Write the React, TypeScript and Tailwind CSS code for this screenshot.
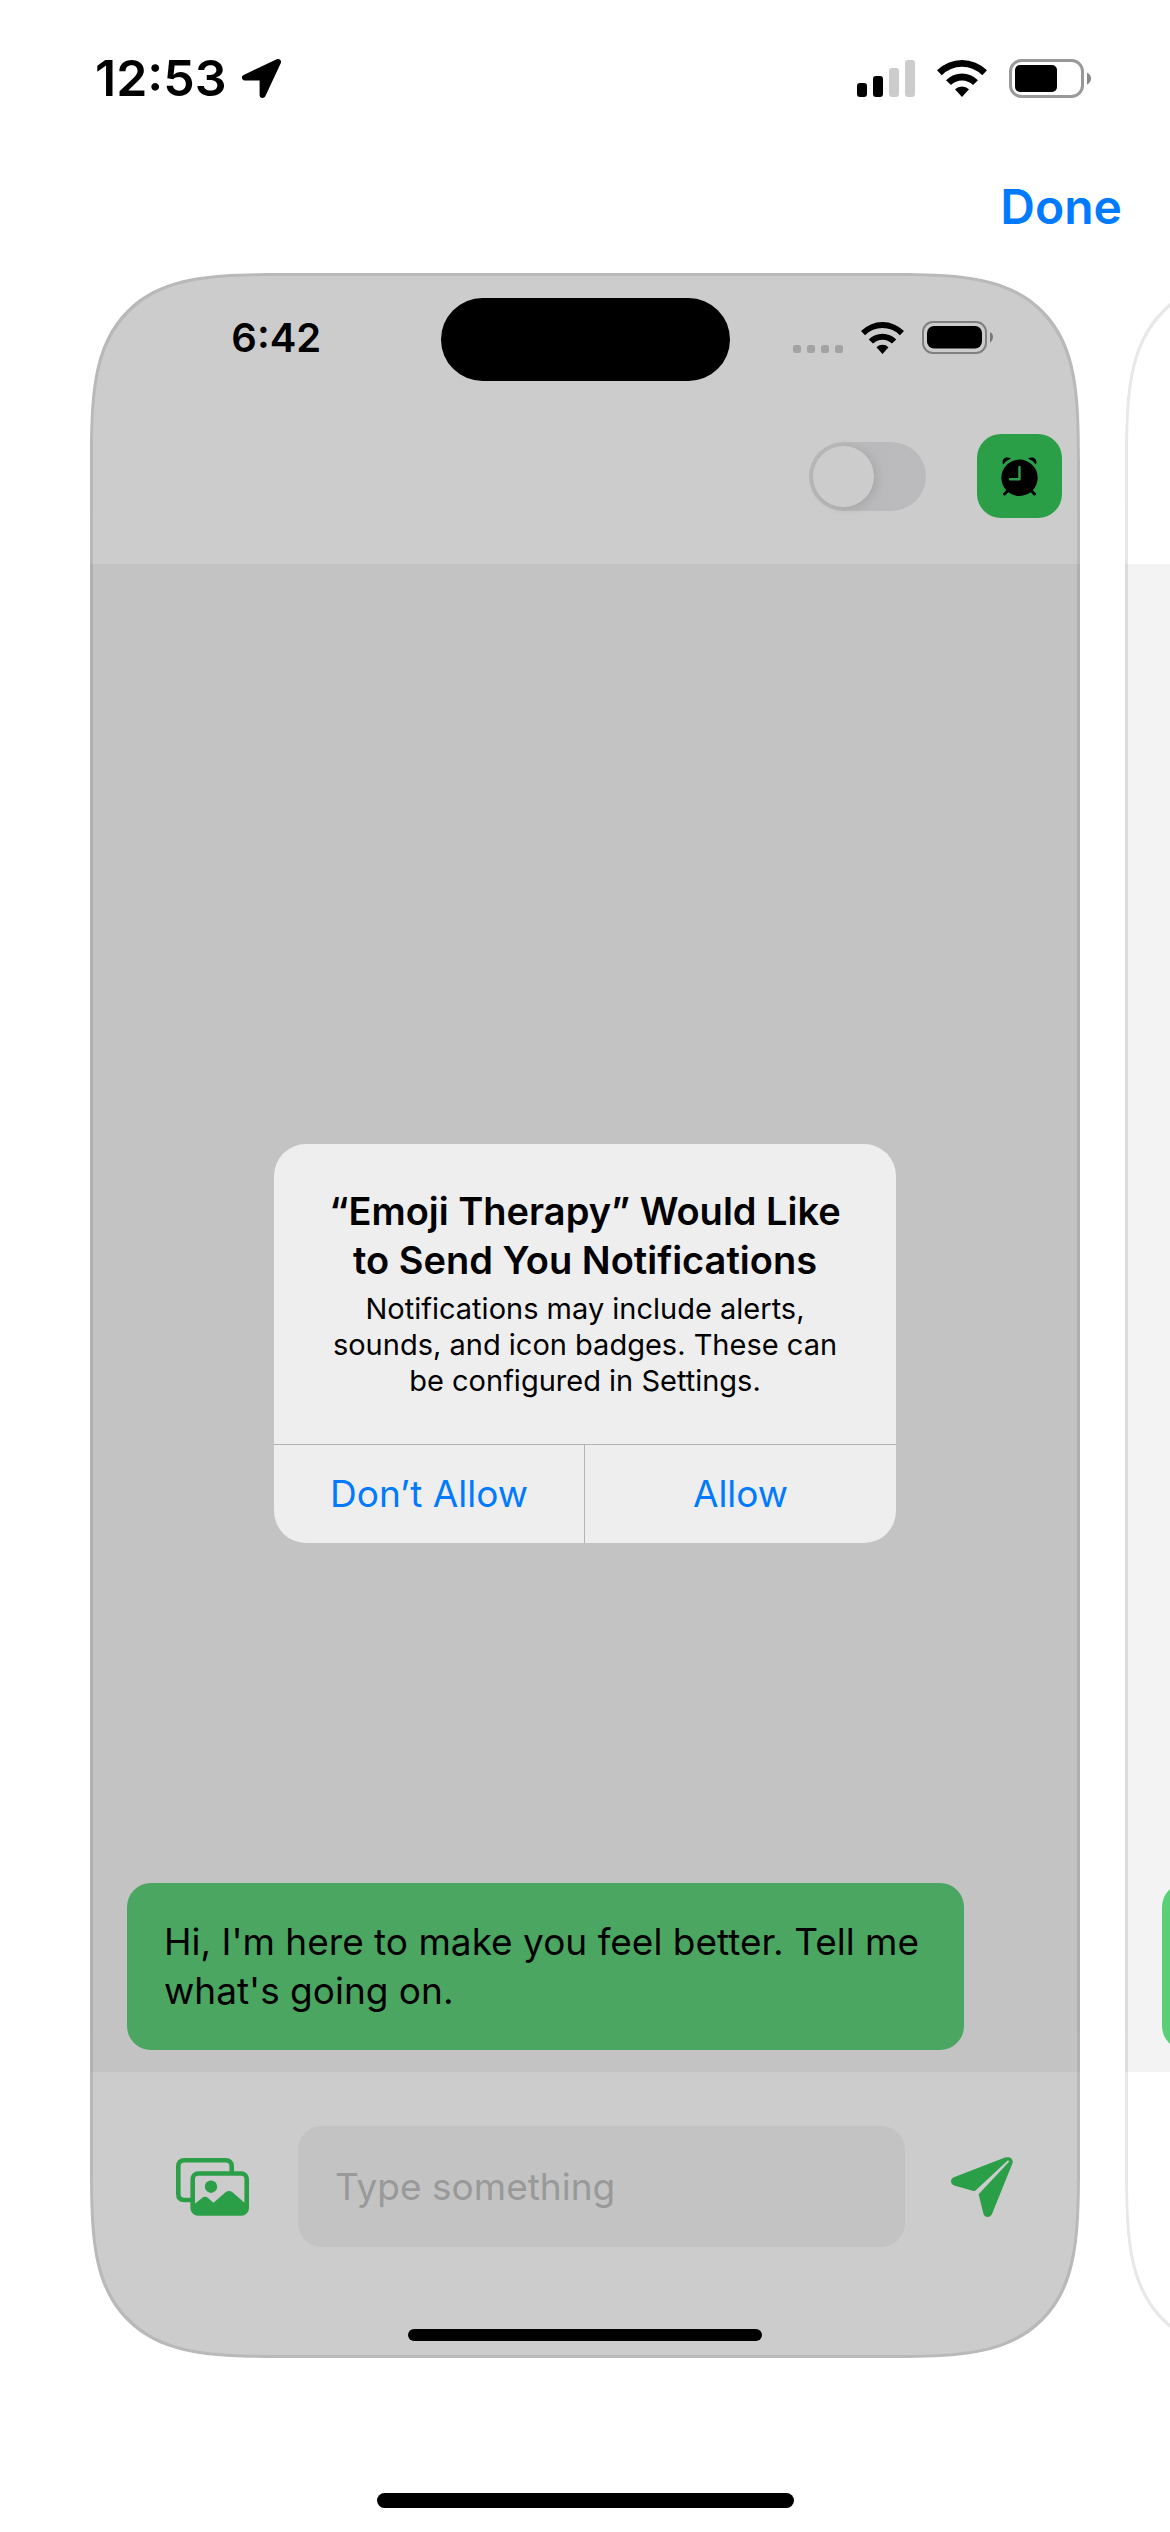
import React, { useState } from 'react';

const WifiIcon = ({ className }: { className: string }) => (
  <svg viewBox="0 0 50 37" className={className} fill="currentColor" aria-hidden="true">
    <path d="M0 10.3A35.5 35.5 0 0 1 50 10.3L45.3 15.3A28.6 28.6 0 0 0 4.7 15.3Z" />
    <path d="M9 20.3A22.2 22.2 0 0 1 41 20.3L36 25A15.6 15.6 0 0 0 14 25Z" />
    <path d="M18 29.2A10.4 10.4 0 0 1 32 29.2L25 37Z" />
  </svg>
);

const SignalIcon = () => (
  <svg viewBox="0 0 58 37" className="h-[37px] w-[58px]" aria-hidden="true">
    <rect x="0" y="23" width="10" height="14" rx="3" />
    <rect x="16" y="16" width="10" height="21" rx="3" />
    <rect x="32" y="8" width="10" height="29" rx="3" fill="#cccccc" />
    <rect x="48" y="0" width="10" height="37" rx="3" fill="#cccccc" />
  </svg>
);

const LocationIcon = () => (
  <svg viewBox="0 0 39 39" className="h-[39px] w-[39px]" aria-hidden="true">
    <path d="M36 3L3 18.6H20.6V36Z" stroke="black" strokeWidth="6" strokeLinejoin="round" />
  </svg>
);

const BatteryIcon = () => (
  <svg viewBox="0 0 82 39" className="h-[39px] w-[82px]" aria-hidden="true">
    <rect x="1.5" y="1.5" width="72" height="36" rx="11" fill="none" stroke="#999999" strokeWidth="3" />
    <rect x="6" y="6" width="42" height="27" rx="5" />
    <path d="M78 13.5Q82 15.5 82 19.5T78 25.5Z" fill="#888888" />
  </svg>
);

const FullBatteryIcon = () => (
  <svg viewBox="0 0 71 33" className="h-[33px] w-[71px]" aria-hidden="true">
    <rect x="1" y="1" width="63" height="31" rx="10" fill="none" stroke="#808080" strokeWidth="2" />
    <rect x="5" y="5" width="55" height="22.5" rx="7" />
    <path d="M68 11Q71 12.5 71 16T68 22Z" fill="#777777" />
  </svg>
);

const DotsIcon = () => (
  <svg viewBox="0 0 50 30" className="h-[30px] w-[50px]" fill="#a3a3a3" aria-hidden="true">
    <rect x="0" y="22" width="8" height="8" rx="2.5" />
    <rect x="14" y="22" width="8" height="8" rx="2.5" />
    <rect x="28" y="22" width="8" height="8" rx="2.5" />
    <rect x="42" y="22" width="8" height="8" rx="2.5" />
  </svg>
);

const AlarmIcon = () => (
  <svg viewBox="0 0 37 39" className="h-[39px] w-[37px]" aria-hidden="true">
    <path d="M2.2 7.6C-.5 2.8 4.8-1.8 10 1.6Q5 3.5 2.2 7.6Z" />
    <path d="M34.8 7.6C37.5 2.8 32.2-1.8 27 1.6Q32 3.5 34.8 7.6Z" />
    <path d="M3.5 37L8 32.5M33.5 37L29 32.5" stroke="black" strokeWidth="3" strokeLinecap="round" />
    <circle cx="18.5" cy="20.8" r="18.2" />
    <path d="M18.5 10V22.2H9" fill="none" stroke="#2b9f48" strokeWidth="2.4" strokeLinecap="round" strokeLinejoin="round" />
  </svg>
);

const PhotosIcon = () => (
  <svg viewBox="0 0 73 58" className="h-[58px] w-[73px]" fill="none" aria-hidden="true">
    <path d="M55.7 14V8.3Q55.7 2.3 49.7 2.3H8.3Q2.3 2.3 2.3 8.3V36Q2.3 42 8.3 42H15" stroke="#2b9f48" strokeWidth="4.6" />
    <rect x="16.7" y="15.5" width="54" height="40" rx="5.5" stroke="#2b9f48" strokeWidth="4.6" />
    <circle cx="35" cy="28.7" r="6.2" fill="#2b9f48" />
    <path d="M18 46.5L26 40Q29 37.5 32 40L37.5 44.7L49.5 34.3Q53 31.5 56.5 34.3L70 46V55H18Z" fill="#2b9f48" />
  </svg>
);

const SendIcon = () => (
  <svg viewBox="0 0 62 60" className="h-[60px] w-[62px]" fill="#2b9f48" aria-hidden="true">
    <path d="M54 .6Q61.5-1.2 61.8 5.5L41 57Q39.5 60 36.5 60Q33.5 60 32.5 57L27.6 37.2L58.3 4.5L57 3.2L24.5 33.6Q23.7 34.3 22.5 34L4 28.8Q0 27.5 0 24.3Q0 21.5 3.5 20Z" />
  </svg>
);

const PhoneFrame = ({ children, className }: { children: React.ReactNode; className: string }) => (
  <section
    className={`relative flex w-full shrink-0 flex-col overflow-hidden rounded-[126px] supports-[corner-shape:squircle]:rounded-[190px] supports-[corner-shape:squircle]:[corner-shape:superellipse(1.68)] ${className}`}
  >
    {children}
    <div className="pointer-events-none absolute inset-0 rounded-[126px] border-[3px] border-black/9 supports-[corner-shape:squircle]:rounded-[190px] supports-[corner-shape:squircle]:[corner-shape:superellipse(1.68)]" />
  </section>
);

const PermissionAlert = () => (
  <div className="absolute inset-0 grid place-items-center pt-14">
    <div
      role="alertdialog"
      aria-labelledby="alert-title"
      className="w-[622px] overflow-hidden rounded-[32px] bg-[#eeeeee] text-center"
    >
      <div className="px-4 pt-[43px] pb-[45px]">
        <h2 id="alert-title" className="text-[38px] leading-[49px] font-semibold whitespace-nowrap">
          “Emoji Therapy” Would Like
          <br />
          to Send You Notifications
        </h2>
        <p className="mt-[6px] text-[29px] leading-[36px] whitespace-nowrap">
          Notifications may include alerts,
          <br />
          sounds, and icon badges. These can
          <br />
          be configured in Settings.
        </p>
      </div>
      <div className="grid h-[99px] grid-cols-2 border-t border-[#b3b3b3] text-[37px] text-[#007aff]">
        <button type="button" className="border-r border-[#b3b3b3]">Don’t Allow</button>
        <button type="button">Allow</button>
      </div>
    </div>
  </div>
);

const ChatScreenshot = () => {
  const [message, setMessage] = useState('');
  const [enabled, setEnabled] = useState(false);

  return (
    <PhoneFrame className="bg-[#cccccc]">
      {/* status bar with the island */}
      <div className="mt-[25px] grid h-[83px] grid-cols-[1fr_289px_1fr] items-center">
        <div className="pb-[4px] pl-[22px] text-center text-[40px] leading-[48px] font-semibold">6:42</div>
        <div className="h-full rounded-full bg-black" />
        <div className="flex items-center justify-center gap-[18px] pr-[24px] pb-[4px]">
          <DotsIcon />
          <WifiIcon className="h-[32px] w-[43px]" />
          <FullBatteryIcon />
        </div>
      </div>

      <div className="flex items-center justify-end gap-[51px] pt-[53px] pr-[18px] pb-[46px]">
        <input
          type="checkbox"
          role="switch"
          aria-label="Reminder"
          checked={enabled}
          onChange={(e) => setEnabled(e.target.checked)}
          className="h-[69px] w-[117px] appearance-none rounded-full bg-linear-to-r from-[#b8b8b8] to-[#bbbbbe] p-[4px] before:block before:size-[61px] before:rounded-full before:bg-[#cccccc] before:shadow-[3px_2px_10px_rgba(0,0,0,0.1)] checked:before:ml-auto"
        />
        <button
          type="button"
          aria-label="Alarm"
          className="grid h-[84px] w-[85px] place-items-center rounded-[24px] bg-[#2b9f48]"
        >
          <AlarmIcon />
        </button>
      </div>

      <div className="flex flex-1 flex-col justify-end bg-[#c3c3c3] pr-[116px] pb-[22px] pl-[37px]">
        <p className="rounded-[24px] bg-[#4ba662] px-[37px] pt-[34px] pb-[35px] text-[37px] leading-[49px] whitespace-nowrap">
          Hi, I'm here to make you feel better. Tell me
          <br />
          what's going on.
        </p>
      </div>

      <form
        className="flex items-center pt-[54px] pr-[67px] pl-[86px]"
        onSubmit={(e) => e.preventDefault()}
      >
        <button type="button" aria-label="Photos">
          <PhotosIcon />
        </button>
        <input
          type="text"
          aria-label="Message"
          placeholder="Type something"
          value={message}
          onChange={(e) => setMessage(e.target.value)}
          className="mr-[46px] ml-[49px] h-[121px] min-w-0 flex-1 rounded-[24px] bg-[#c3c3c3] px-[37px] text-[37px] outline-none placeholder:text-[#999999]"
        />
        <button type="submit" aria-label="Send">
          <SendIcon />
        </button>
      </form>
      <div className="mx-auto mt-[82px] mb-[17px] h-[12px] w-[354px] rounded-full bg-black" />

      <PermissionAlert />
    </PhoneFrame>
  );
};

/* only the left edge of this one peeks in from the right */
const NextScreenshot = () => (
  <PhoneFrame className="bg-white">
    <div className="h-[291px]" />
    <div className="flex flex-1 flex-col justify-end bg-[#f3f3f3] pr-[116px] pb-[22px] pl-[37px]">
      <div className="h-[167px] rounded-[24px] bg-[#59d077]" />
    </div>
    <div className="h-[286px]" />
  </PhoneFrame>
);

const App = () => {
  return (
    <main className="flex min-h-screen flex-col overflow-hidden bg-white font-['Inter',sans-serif] text-black">
      <div className="flex h-[156px] items-center justify-between pr-[79px] pl-[95px]">
        <div className="flex items-center gap-[15px]">
          <span className="text-[50px] leading-[60px] font-semibold">12:53</span>
          <LocationIcon />
        </div>
        <div className="flex items-center gap-[22px]">
          <SignalIcon />
          <WifiIcon className="h-[37px] w-[50px]" />
          <BatteryIcon />
        </div>
      </div>

      <header className="flex h-[117px] items-start justify-end pr-[48px]">
        <button type="button" className="pt-[21px] text-[48px] leading-[60px] font-semibold text-[#007aff]">
          Done
        </button>
      </header>

      <div className="flex flex-1 gap-[45px] px-[90px]">
        <ChatScreenshot />
        <NextScreenshot />
      </div>

      <div className="mx-auto mt-[135px] mb-[24px] h-[15px] w-[417px] rounded-full bg-black" />
    </main>
  );
};

export default App;
